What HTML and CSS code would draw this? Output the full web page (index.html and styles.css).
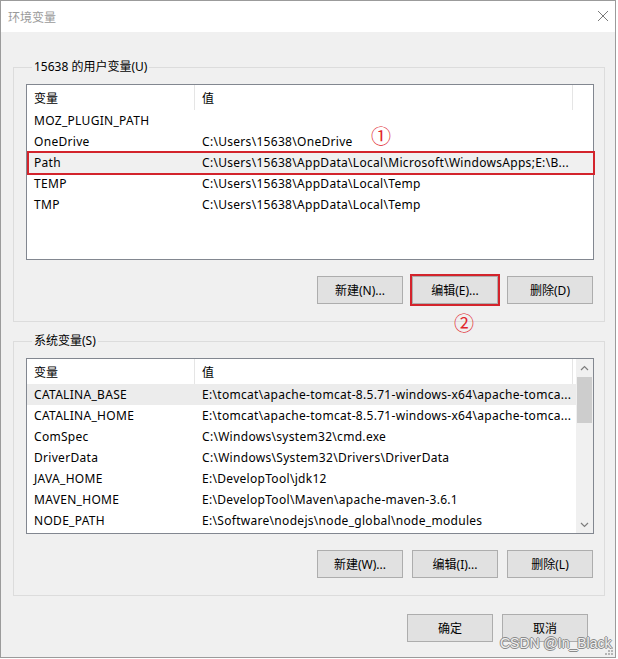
FILE: index.html
```html
<!DOCTYPE html>
<html lang="zh-CN">
<head>
<meta charset="utf-8">
<title>环境变量</title>
<link rel="stylesheet" href="styles.css">
</head>
<body>
<div class="window">
  <div class="titlebar">
    <span class="title">环境变量</span>
    <svg class="close" width="12" height="12" viewBox="0 0 12 12"><path d="M1 1 L11 11 M11 1 L1 11" stroke="#7a7a7a" stroke-width="1" fill="none"/></svg>
  </div>
  <div class="content">
    <fieldset class="group">
      <legend>15638 的用户变量(U)</legend>
      <div class="list">
        <div class="cols">
          <div class="head"><span class="hc c1">变量</span><span class="hc c2">值</span></div>
          <div class="row"><span class="c1">MOZ_PLUGIN_PATH</span><span class="c2"></span></div>
          <div class="row"><span class="c1">OneDrive</span><span class="c2">C:\Users\15638\OneDrive</span></div>
          <div class="row sel"><span class="c1">Path</span><span class="c2">C:\Users\15638\AppData\Local\Microsoft\WindowsApps;E:\B...</span></div>
          <div class="row"><span class="c1">TEMP</span><span class="c2">C:\Users\15638\AppData\Local\Temp</span></div>
          <div class="row"><span class="c1">TMP</span><span class="c2">C:\Users\15638\AppData\Local\Temp</span></div>
        </div>
        <div class="redbox"></div>
        <span class="mark mark1">①</span>
      </div>
      <div class="btnrow">
        <button class="btn">新建(N)...</button>
        <button class="btn marked">编辑(E)...<span class="mark mark2">②</span></button>
        <button class="btn">删除(D)</button>
      </div>
    </fieldset>

    <fieldset class="group g2">
      <legend>系统变量(S)</legend>
      <div class="list scroll">
        <div class="cols">
          <div class="head"><span class="hc c1">变量</span><span class="hc c2">值</span></div>
          <div class="row hover"><span class="c1">CATALINA_BASE</span><span class="c2">E:\tomcat\apache-tomcat-8.5.71-windows-x64\apache-tomca...</span></div>
          <div class="row"><span class="c1">CATALINA_HOME</span><span class="c2">E:\tomcat\apache-tomcat-8.5.71-windows-x64\apache-tomca...</span></div>
          <div class="row"><span class="c1">ComSpec</span><span class="c2">C:\Windows\system32\cmd.exe</span></div>
          <div class="row"><span class="c1">DriverData</span><span class="c2">C:\Windows\System32\Drivers\DriverData</span></div>
          <div class="row"><span class="c1">JAVA_HOME</span><span class="c2">E:\DevelopTool\jdk12</span></div>
          <div class="row"><span class="c1">MAVEN_HOME</span><span class="c2">E:\DevelopTool\Maven\apache-maven-3.6.1</span></div>
          <div class="row"><span class="c1">NODE_PATH</span><span class="c2">E:\Software\nodejs\node_global\node_modules</span></div>
        </div>
        <div class="sbar">
          <div class="arrow"><svg width="9" height="6" viewBox="0 0 9 6"><path d="M1 5 L4.5 1.5 L8 5" stroke="#7d7d7d" stroke-width="1.2" fill="none"/></svg></div>
          <div class="track"><div class="thumb"></div></div>
          <div class="arrow"><svg width="9" height="6" viewBox="0 0 9 6"><path d="M1 1 L4.5 4.5 L8 1" stroke="#7d7d7d" stroke-width="1.2" fill="none"/></svg></div>
        </div>
      </div>
      <div class="btnrow">
        <button class="btn">新建(W)...</button>
        <button class="btn">编辑(I)...</button>
        <button class="btn">删除(L)</button>
      </div>
    </fieldset>

    <div class="footer">
      <button class="btn fbtn">确定</button>
      <button class="btn fbtn">取消</button>
    </div>
  </div>
  <span class="watermark">CSDN @In_Black</span>
  <svg class="grip" width="8" height="8" viewBox="0 0 8 8"><g fill="#b5b5b5"><rect x="6" y="0" width="2" height="2"/><rect x="3" y="3" width="2" height="2"/><rect x="6" y="3" width="2" height="2"/><rect x="0" y="6" width="2" height="2"/><rect x="3" y="6" width="2" height="2"/><rect x="6" y="6" width="2" height="2"/></g></svg>
</div>
</body>
</html>
```
FILE: styles.css
```css
* { box-sizing: border-box; }
html, body { margin: 0; padding: 0; background: #ffffff; }
body {
  font-family: "Noto Sans", "Noto Sans CJK SC", sans-serif;
  font-size: 12px;
  color: #000;
}
.window {
  width: 616px;
  height: 658px;
  border: 1px solid #9b9b9b;
  background: #f0f0f0;
  display: flex;
  flex-direction: column;
  position: relative;
}
.titlebar {
  height: 31px;
  flex: none;
  background: #fff;
  display: flex;
  align-items: center;
  justify-content: space-between;
  padding: 0 6px 0 7px;
}
.title { color: #9a9a9a; font-family: "Noto Sans CJK SC", sans-serif; font-size: 12px; }
.close { margin-top: -1px; }
.content {
  flex: 1;
  display: flex;
  flex-direction: column;
  padding: 0 10px 0 12px;
}
.group {
  margin: 26px 0 0 0;
  padding: 8px 10px 17px 12px;
  border: 1px solid #dcdcdc;
  min-width: 0;
}
.group.g2 { margin-top: 10px; }
.group legend {
  padding: 0 2px;
  margin-left: 6px;
  line-height: 18px;
  font-size: 12px;
}
.list {
  position: relative;
  height: 176px;
  border: 1px solid #828790;
  background: #fff;
  display: flex;
}
.cols { flex: 1; min-width: 0; }
.head { display: grid; grid-template-columns: 168px 378px; height: 25px; }
.hc { border-right: 1px solid #e5e5e5; padding-left: 7px; display: flex; align-items: center; }
.row { display: grid; grid-template-columns: 168px 1fr; height: 21px; align-items: center; }
.row span { padding-left: 7px; white-space: nowrap; overflow: hidden; letter-spacing: 0.3px; }
.row.sel { background: #f0f0f0; }
.row.hover { background: #ececec; }
.redbox {
  position: absolute;
  left: 0;
  top: 66px;
  width: 568px;
  height: 24px;
  border: 2px solid #d3242c;
}
.mark {
  position: absolute;
  color: #e0262e;
  font-family: "Noto Sans CJK SC", sans-serif;
  font-size: 20px;
  line-height: 20px;
  letter-spacing: 0;
}
.mark1 { left: 344px; top: 41px; }
.mark2 { left: 41px; top: 36px; }
.sbar {
  width: 17px;
  flex: none;
  background: #f0f0f0;
  display: flex;
  flex-direction: column;
}
.arrow { height: 17px; display: flex; align-items: center; justify-content: center; }
.track { flex: 1; padding: 1px 1px; }
.thumb { height: 46px; background: #cdcdcd; }
.btnrow {
  display: flex;
  justify-content: flex-end;
  gap: 9px;
  margin-top: 16px;
  padding-right: 1px;
}
.btn {
  width: 86px;
  height: 28px;
  background: #e1e1e1;
  border: 1px solid #adadad;
  font-family: "Noto Sans", "Noto Sans CJK SC", sans-serif;
  font-size: 12px;
  color: #000;
  padding: 0;
  position: relative;
}
.btn.marked { outline: 2px solid #d3242c; outline-offset: 0; }
.footer {
  display: flex;
  justify-content: flex-end;
  gap: 9px;
  margin-top: 18px;
  padding-right: 17px;
}
.fbtn { width: 86px; }
.watermark {
  position: absolute;
  left: 499px;
  top: 634px;
  font-family: "Liberation Sans", sans-serif;
  font-size: 14px;
  color: #eeeeee;
  text-shadow: 1px 0 0 #8a8a8a, -1px 0 0 #8a8a8a, 0 1px 0 #8a8a8a, 0 -1px 0 #8a8a8a;
}
.grip { position: absolute; right: 2px; bottom: 2px; }
```
